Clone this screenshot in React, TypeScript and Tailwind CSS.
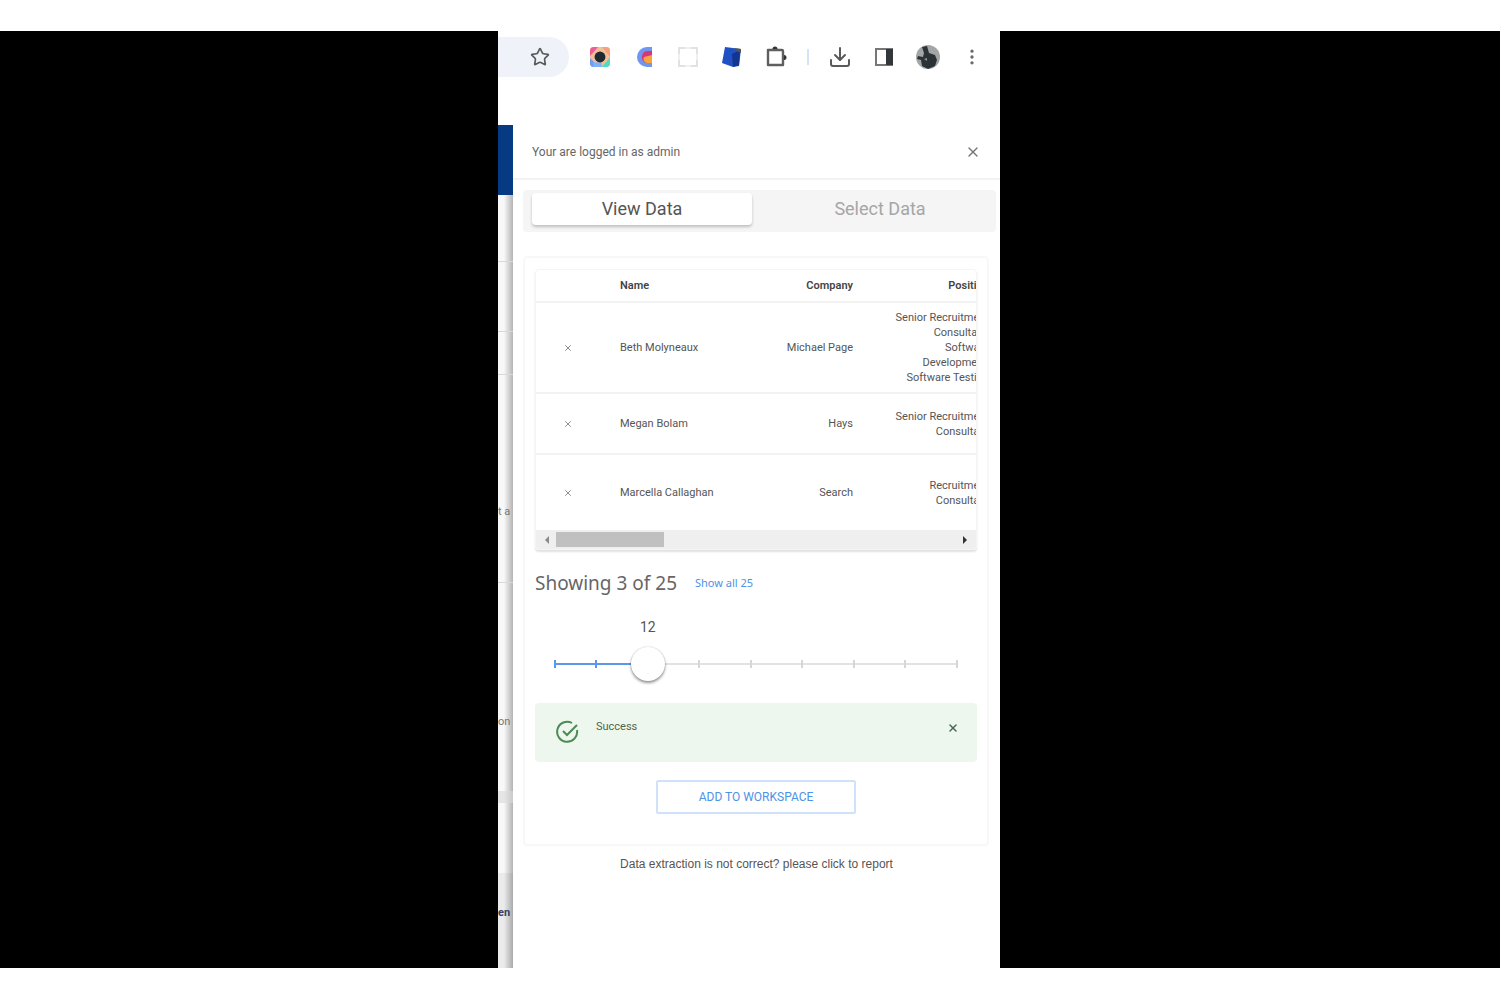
import { useState } from "react";
import { Download, EllipsisVertical, Star, X } from "lucide-react";

interface Contact {
  name: string;
  company: string;
  position: string[];
  rowClass: string;
}

const contacts: Contact[] = [
  {
    name: "Beth Molyneaux",
    company: "Michael Page",
    position: [
      "Senior Recruitment",
      "Consultant,",
      "Software",
      "Development,",
      "Software Testing",
    ],
    rowClass: "h-[91px]",
  },
  {
    name: "Megan Bolam",
    company: "Hays",
    position: ["Senior Recruitment", "Consultant"],
    rowClass: "h-[61px]",
  },
  {
    name: "Marcella Callaghan",
    company: "Search",
    position: ["Recruitment", "Consultant"],
    rowClass: "h-[76px]",
  },
];

const MIN = 3;
const MAX = 42;
const marks = [3, 7, 12, 17, 22, 27, 32, 37, 42];

const toPercent = (value: number) => ((value - MIN) / (MAX - MIN)) * 100;

const ToolbarButton = ({
  label,
  children,
}: {
  label: string;
  children: React.ReactNode;
}) => (
  <button
    aria-label={label}
    className="flex h-10 w-11 shrink-0 items-center justify-center"
  >
    {children}
  </button>
);

const BrowserToolbar = () => (
  <div className="flex h-10 items-center">
    <div className="flex h-10 w-[71px] shrink-0 items-center justify-center rounded-r-full bg-[#eff3f9] pl-3">
      <button aria-label="Bookmark">
        <Star className="size-5 text-[#5a5a5a]" strokeWidth={2} />
      </button>
    </div>
    <div className="flex flex-1 items-center pl-[9px]">
      <ToolbarButton label="Camera extension">
        <svg viewBox="0 0 22 22" className="size-5">
          <rect width="22" height="22" rx="4" fill="#f3c09a" />
          <path d="M0 4a4 4 0 0 1 4-4h5L0 10z" fill="#ec5f92" />
          <path d="M13 0h5a4 4 0 0 1 4 4v7z" fill="#f5a27c" />
          <path d="M0 12l10 10H4a4 4 0 0 1-4-4z" fill="#6d9cf5" />
          <path d="M3 17h10v5H4z" fill="#7fb2fa" />
          <path d="M22 11v7a4 4 0 0 1-4 4h-5z" fill="#4fdcc0" />
          <circle cx="11" cy="11" r="6" fill="#1f2a33" />
        </svg>
      </ToolbarButton>
      <ToolbarButton label="Clip extension">
        <svg viewBox="0 0 16 20" className="h-5 w-4">
          <path d="M16 0v20h-5A10 10 0 0 1 11 0z" fill="#6f97ee" />
          <path d="M16 4v12h-6a6 6 0 0 1-4-7 6 6 0 0 1 6-5z" fill="#d8357c" />
          <path d="M16 8v8h-5a4 4 0 0 1-3-6l4-1z" fill="#f7a540" />
        </svg>
      </ToolbarButton>
      <ToolbarButton label="Capture extension">
        <svg
          viewBox="0 0 20 20"
          className="size-5"
          fill="none"
          stroke="#e2e2e2"
          strokeWidth="2"
        >
          <path d="M1 7V1h6M13 1h6v6M19 13v6h-6M7 19H1v-6" />
          <path d="M7 1h6M19 7v6M13 19H7M1 13V7" stroke="#f0f0f0" />
        </svg>
      </ToolbarButton>
      <ToolbarButton label="Notes extension">
        <svg viewBox="0 0 20 20" className="size-5">
          <path d="M3 0l16 2-2 17-6 1-11-4z" fill="#1f50c4" />
          <path d="M10 7l8-4-1 15-6 2z" fill="#123591" />
          <path d="M12 1l7 1v4l-4-2z" fill="#55584a" />
        </svg>
      </ToolbarButton>
      <ToolbarButton label="Extensions">
        <svg viewBox="0 0 24 24" className="size-6">
          <path
            d="M4 5h14a1 1 0 0 1 1 1v14H4z"
            fill="none"
            stroke="#5f5f5f"
            strokeWidth="2.400"
            strokeLinejoin="round"
          />
          <path
            d="M8.500 4a2.500 2.500 0 0 1 5 0zM20 10a2.500 2.500 0 0 1 0 5z"
            fill="#333333"
          />
        </svg>
      </ToolbarButton>
      <span className="mx-[9px] h-4 w-0.5 shrink-0 bg-[#d3e3fa]" />
      <ToolbarButton label="Downloads">
        <Download className="size-6 text-[#5a5a5a]" strokeWidth={2} />
      </ToolbarButton>
      <ToolbarButton label="Side panel">
        <svg viewBox="0 0 20 20" className="size-5">
          <rect
            x="2"
            y="2"
            width="16"
            height="16"
            fill="none"
            stroke="#777777"
            strokeWidth="2"
          />
          <path d="M12 2h7v16h-7z" fill="#33373a" />
        </svg>
      </ToolbarButton>
      <ToolbarButton label="Profile">
        <svg viewBox="0 0 24 24" className="size-6">
          <circle cx="12" cy="12" r="12" fill="#a3a6a6" />
          <path
            d="M6 2l5-1 2 7 6 2 2 5-2 6-7 3-6-3-1-6-4-1 1-3 5 1 1-4z"
            fill="#2c3336"
          />
          <path d="M8 14l3-1v3z" fill="#8e9494" />
        </svg>
      </ToolbarButton>
      <ToolbarButton label="Menu">
        <EllipsisVertical className="size-5 text-[#6a6a6a]" strokeWidth={2} />
      </ToolbarButton>
    </div>
  </div>
);

// Sliver of the host page that stays visible beside the drawer
const HostPage = () => (
  <div className="flex w-[15px] shrink-0 flex-col overflow-hidden bg-linear-to-r from-[#f8f8f8] from-40% to-[#b4b4b4] text-[11px] leading-4 text-[#777777]">
    <div className="h-[70px] bg-[#063a82]" />
    <div className="h-[67px] border-b border-[#d8d8d8]" />
    <div className="h-[70px] border-b border-[#d8d8d8]" />
    <div className="h-[43px] border-b border-[#d8d8d8]" />
    <div className="flex h-[208px] items-end border-b border-[#d8d8d8] pb-[62px] whitespace-nowrap">
      t a
    </div>
    <div className="flex h-[208px] items-end pb-[61px]">on</div>
    <div className="h-3 bg-[#d9d9d9]/60" />
    <div className="h-[70px]" />
    <div className="flex-1 bg-black/5 pt-8">
      <span className="font-bold text-[#33406b]">en</span>
    </div>
  </div>
);

const ContactTable = () => (
  <div className="overflow-hidden rounded-sm border border-[#f5f5f5] shadow-[0_2px_2px_rgba(0,0,0,0.12)]">
    <div className="overflow-hidden">
      <table className="w-[469px] table-fixed text-[11px] leading-[15px] text-[#555555]">
        <thead>
          <tr className="h-8 border-b-2 border-[#f2f2f2] text-[#444444]">
            <th className="w-[68px]" aria-label="Remove" />
            <th className="w-[134px] px-4 text-left font-semibold">Name</th>
            <th className="w-[131px] px-4 text-right font-semibold">Company</th>
            <th className="px-4 text-right font-semibold">Position</th>
          </tr>
        </thead>
        <tbody>
          {contacts.map((contact) => (
            <tr
              key={contact.name}
              className={`${contact.rowClass} border-b-2 border-[#f2f2f2] last:border-b-0`}
            >
              <td className="pr-1 text-center align-middle">
                <button
                  className="align-middle"
                  aria-label={`Remove ${contact.name}`}
                >
                  <X className="size-[10px] text-[#777777]" />
                </button>
              </td>
              <td className="px-4 whitespace-nowrap">{contact.name}</td>
              <td className="px-4 text-right whitespace-nowrap">
                {contact.company}
              </td>
              <td className="px-4 text-right whitespace-nowrap">
                {contact.position.map((line) => (
                  <div key={line}>{line}</div>
                ))}
              </td>
            </tr>
          ))}
        </tbody>
      </table>
    </div>
    <div className="flex h-[19px] items-center bg-[#efefef] px-1">
      <button aria-label="Scroll left">
        <svg viewBox="0 0 16 16" className="size-4">
          <path d="M9 4v8L5 8z" fill="#8a8a8a" />
        </svg>
      </button>
      <div className="flex-1">
        <div className="h-[15px] w-[108px] bg-[#c0c0c0]" />
      </div>
      <button aria-label="Scroll right">
        <svg viewBox="0 0 16 16" className="size-4">
          <path d="M7 4v8l4-4z" fill="#333333" />
        </svg>
      </button>
    </div>
  </div>
);

const CountSlider = () => {
  const [count, setCount] = useState(12);

  return (
    <div className="px-5">
      <div className="relative h-5">
        <output
          htmlFor="count"
          className="absolute -translate-x-1/2 text-sm leading-5 text-[#555555]"
          style={{ left: `${toPercent(count)}%` }}
        >
          {count}
        </output>
      </div>
      <div className="relative mt-2 flex h-[38px] items-center">
        <div className="h-0.5 w-full bg-[#e2e2e2]">
          <div
            className="h-0.5 bg-[#5b98ec]"
            style={{ width: `${toPercent(count)}%` }}
          />
        </div>
        {marks.map((mark) => (
          <span
            key={mark}
            className={`absolute h-2 w-0.5 -translate-x-1/2 ${
              mark <= count ? "bg-[#5b98ec]" : "bg-[#d6d6d6]"
            }`}
            style={{ left: `${toPercent(mark)}%` }}
          />
        ))}
        <input
          id="count"
          type="range"
          aria-label="Rows to show"
          min={MIN}
          max={MAX}
          value={count}
          onChange={(e) => setCount(Number(e.target.value))}
          className="absolute -inset-x-[17px] h-[34px] appearance-none bg-transparent [&::-webkit-slider-thumb]:size-[34px] [&::-webkit-slider-thumb]:appearance-none [&::-webkit-slider-thumb]:rounded-full [&::-webkit-slider-thumb]:bg-white [&::-webkit-slider-thumb]:shadow-[0_2px_3px_rgba(0,0,0,0.4),0_0_2px_rgba(0,0,0,0.2)]"
        />
      </div>
    </div>
  );
};

const App = () => {
  return (
    <div className="flex min-h-screen flex-col bg-white pt-[31px] pb-8 font-['Roboto',sans-serif]">
      <div className="flex flex-1 bg-black">
        <div className="flex-1" />
        <main className="flex w-[502px] shrink-0 flex-col overflow-hidden bg-white pt-1.5">
          <BrowserToolbar />

          <div className="mt-12 flex flex-1">
            <HostPage />

            <section className="flex min-w-0 flex-1 flex-col">
              <header className="flex h-[55px] items-center justify-between border-b-2 border-[#f3f3f3] px-[19px]">
                <p className="text-xs text-[#666666]">
                  Your are logged in as admin
                </p>
                <button aria-label="Close">
                  <X className="size-4 text-[#777777]" strokeWidth={2} />
                </button>
              </header>

              <div
                role="tablist"
                className="mt-2.5 mr-1 ml-2.5 flex h-[42px] items-start rounded-sm bg-[#f5f5f5] pt-[3px] pl-[9px] text-lg"
              >
                <button
                  role="tab"
                  aria-selected="true"
                  className="h-8 w-[220px] rounded-sm bg-white leading-8 text-[#555555] shadow-[0_2px_3px_rgba(0,0,0,0.22)]"
                >
                  View Data
                </button>
                <button
                  role="tab"
                  aria-selected="false"
                  className="flex-1 pl-3 leading-8 text-[#a6a6a6]"
                >
                  Select Data
                </button>
              </div>

              <div className="mt-6 mr-[11px] ml-2.5 rounded-sm border-2 border-[#f8f8f8] px-2.5 pt-[11px] pb-[30px]">
                <ContactTable />

                <div className="mt-5 flex items-center gap-[18px] font-['Noto_Sans',sans-serif]">
                  <h2 className="text-[19px] leading-[26px] text-[#666666]">
                    Showing 3 of 25
                  </h2>
                  <a
                    href="#all"
                    className="text-[11px] leading-4 text-[#4c92e8]"
                  >
                    Show all 25
                  </a>
                </div>

                <div className="mt-[21px]">
                  <CountSlider />
                </div>

                <div
                  role="alert"
                  className="mt-5 flex h-[59px] items-start rounded-sm bg-[#edf7ed] pt-4 pr-[18px] pl-[21px] text-[11px] leading-4 text-[#4d6650]"
                >
                  <svg
                    viewBox="0 0 24 24"
                    className="mt-px size-6"
                    fill="none"
                    stroke="#4d8a55"
                    strokeWidth="2"
                  >
                    <path d="M21 10a10 10 0 1 1-5-7" />
                    <path d="M7 11l4 4L21 5" />
                  </svg>
                  <span className="ml-4 flex-1">Success</span>
                  <button aria-label="Dismiss" className="pt-[3px]">
                    <X className="size-3 text-[#4d6650]" strokeWidth={3} />
                  </button>
                </div>

                <div className="mt-[18px] flex justify-center">
                  <button className="h-[34px] w-[200px] rounded-xs border-2 border-[#cfe2f9] text-xs text-[#4c92e8] uppercase">
                    Add to workspace
                  </button>
                </div>
              </div>

              <p className="mt-2 text-center font-['Liberation_Sans',sans-serif] text-xs leading-5 text-[#555555]">
                Data extraction is not correct? please click to report
              </p>
            </section>
          </div>
        </main>
        <div className="w-1/3" />
      </div>
    </div>
  );
};

export default App;
